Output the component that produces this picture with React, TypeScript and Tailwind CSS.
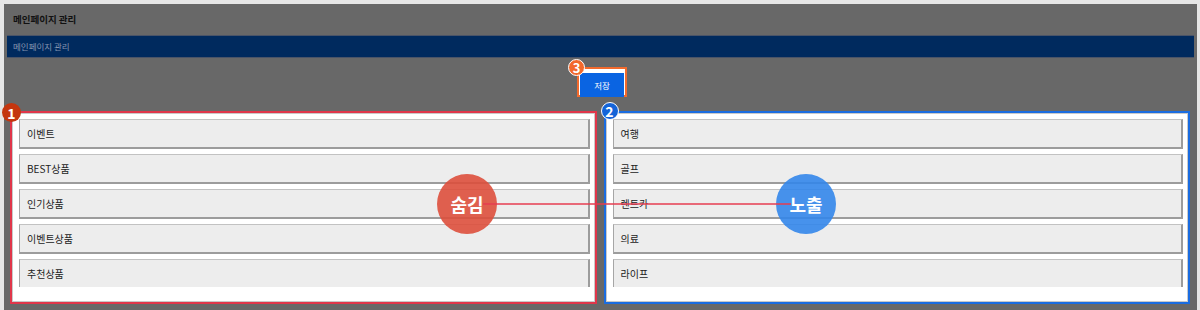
const hidden = ["이벤트", "BEST상품", "인기상품", "이벤트상품", "추천상품"];
const shown = ["여행", "골프", "렌트카", "의료", "라이프"];

const Item = ({ label }: { label: string }) => (
  <div className="h-[30px] shrink-0 flex items-center px-[7px] bg-[#ededed] border border-t-[#c2c2c2] border-l-[#a6a6a6] border-r-2 border-b-2 border-r-[#9c9c9c] border-b-[#9c9c9c] text-[10px] text-[#222]">
    {label}
  </div>
);

const Panel = ({
  items,
  tone,
  badge,
}: {
  items: string[];
  tone: "red" | "blue";
  badge: string;
}) => (
  <div
    className={
      tone === "red"
        ? "relative flex-1 border-2 border-[#e0364a] bg-white"
        : "relative flex-1 border-2 border-[#1a6ce0] bg-white"
    }
  >
    <div className="border border-[#c9c9c9] pt-[5px] pb-[14px] pl-[6px] pr-[4px]">
      <div className="h-[168px] overflow-hidden flex flex-col gap-[5px]">
        {items.map((it) => (
          <Item key={it} label={it} />
        ))}
      </div>
    </div>
    {tone === "red" ? (
      <span className="absolute -left-[10px] -top-[10px] w-[19px] h-[19px] rounded-full bg-[#c4360f] text-white text-[14px] font-bold flex items-center justify-center leading-none">
        {badge}
      </span>
    ) : (
      <span className="absolute -left-[5px] -top-[11px] w-[18px] h-[18px] rounded-full bg-[#1464d8] border border-white text-white text-[14px] font-bold flex items-center justify-center leading-none">
        {badge}
      </span>
    )}
  </div>
);

export default function App() {
  return (
    <div
      className="w-[1200px] h-[310px] overflow-hidden bg-[#e6e6e6] pt-[4px] pl-[4px] pr-[3px]"
      style={{ fontFamily: '"Noto Sans CJK KR", "Noto Sans", sans-serif' }}
    >
      <div className="h-[320px] bg-[#686868]">
        {/* title */}
        <div className="h-[31px] flex items-center px-[9px] text-[9.5px] font-bold text-[#111]">
          메인페이지 관리
        </div>
        <div className="mx-[3px] h-[23px] bg-[#002a5e] border-y border-[#4a5468] flex items-center px-[6px] text-[8.5px] text-[#8595b0]">
          메인페이지 관리
        </div>

        {/* save */}
        <div className="flex justify-center pt-[9px] pl-[3px]">
          <div className="relative w-[50px] h-[30px] border-2 border-[#f26a2d] bg-white p-[1px]">
            <button className="w-full h-full bg-[#0a64e2] text-white text-[8.5px]">
              저장
            </button>
            <span className="absolute -left-[11px] -top-[10px] w-[17px] h-[17px] rounded-full bg-[#f2692c] border border-white text-white text-[13px] font-bold flex items-center justify-center leading-none">
              3
            </span>
          </div>
        </div>

        {/* panels */}
        <div className="relative mt-[14px] flex gap-[7px] pl-[6px] pr-[7px]">
          <Panel items={hidden} tone="red" badge="1" />
          <Panel items={shown} tone="blue" badge="2" />

          <div className="absolute left-[433px] top-[63px] w-[60px] h-[60px] rounded-full bg-[#dd4f3c]/90 flex items-center justify-center text-white text-[18px] font-bold">
            숨김
          </div>
          <div className="absolute left-[772px] top-[63px] w-[60px] h-[60px] rounded-full bg-[#3386ea]/90 flex items-center justify-center text-white text-[18px] font-bold">
            노출
          </div>
          <div className="absolute left-[479px] top-[92px] w-[308px] h-[2px] bg-[#e63c50]/75" />
        </div>
      </div>
    </div>
  );
}
